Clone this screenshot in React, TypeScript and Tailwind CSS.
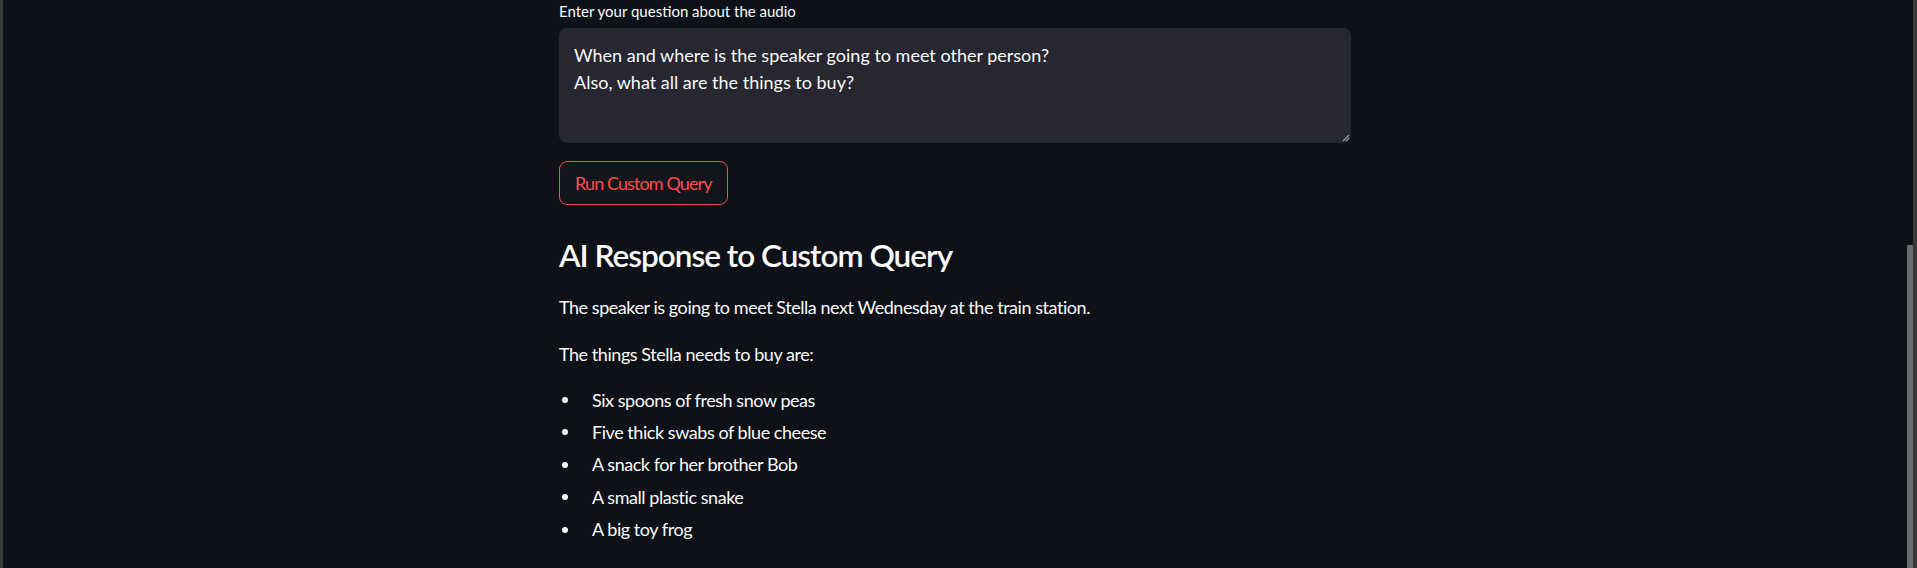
import React from 'react';

const ITEMS = [
  'Six spoons of fresh snow peas',
  'Five thick swabs of blue cheese',
  'A snack for her brother Bob',
  'A small plastic snake',
  'A big toy frog',
];

const App: React.FC = () => {
  return (
    <div
      className="flex h-[568px] w-full overflow-hidden bg-[#0e1117] text-[#fafafa]"
      style={{ fontFamily: 'Lato, "Noto Sans", sans-serif' }}
    >
      {/* window edge */}
      <div className="w-[3px] shrink-0 bg-[#3c3c3c]" />

      <main className="flex flex-1 justify-center">
        <div className="w-[792px]">
          <label className="block pt-[2px] text-[15px] leading-[18px]">Enter your question about the audio</label>
          <div className="relative mt-[8px] h-[115px] rounded-lg bg-[#262730] px-[15px] pt-[14px] text-[18px] leading-[27px]">
            <p>When and where is the speaker going to meet other person?</p>
            <p>Also, what all are the things to buy?</p>
            {/* resize grip */}
            <svg className="absolute bottom-[1px] right-[1px]" width="8" height="8" viewBox="0 0 8 8">
              <path d="M7 1 L1 7 M7 4 L4 7" stroke="#9a9aa0" strokeWidth="1.2" />
            </svg>
          </div>

          <button className="mt-[18px] h-[44px] rounded-lg border border-[#ff4b4b] bg-[#12151c] px-[15px] text-[18px] tracking-[-0.9px] text-[#ff4b4b]">
            Run Custom Query
          </button>

          <h3 className="mt-[30px] text-[31.5px] font-semibold leading-[40px] tracking-[-1px]">AI Response to Custom Query</h3>

          <div className="text-[18px] leading-[28.8px] tracking-[-0.45px]">
            <p className="mt-[18px]">
              The speaker is going to meet Stella next Wednesday at the train station.
            </p>
            <p className="mt-[18px]">The things Stella needs to buy are:</p>

            <ul className="mt-[17px]">
              {ITEMS.map((item) => (
                <li key={item} className="mb-[3.6px] flex items-center">
                  <span className="flex w-[33px] justify-start pl-[3px]">
                    <span className="h-[6px] w-[6px] rounded-full bg-[#fafafa]" />
                  </span>
                  <span>{item}</span>
                </li>
              ))}
            </ul>
          </div>
        </div>
      </main>

      {/* scrollbar */}
      <div className="w-[6px] shrink-0">
        <div className="mt-[245px] h-[323px] rounded-t-[1px] bg-[#6a6c70]" />
      </div>
      <div className="w-[4px] shrink-0 bg-[#3a3a3a]" />
    </div>
  );
};

export default App;
